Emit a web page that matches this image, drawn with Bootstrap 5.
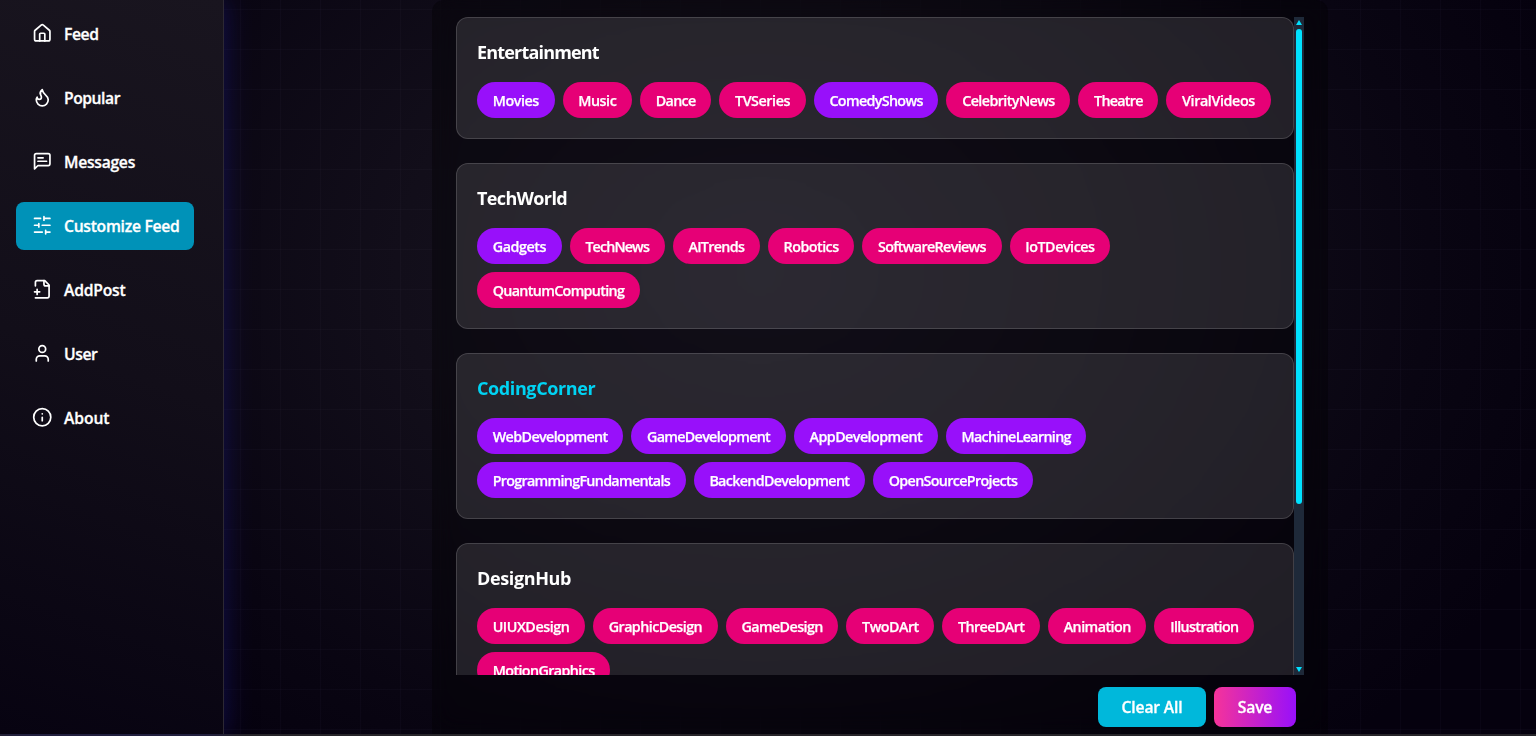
<!DOCTYPE html>
<html lang="en">
<head>
<meta charset="utf-8">
<meta name="viewport" content="width=device-width, initial-scale=1">
<title>Customize Feed</title>
<link href="https://cdn.jsdelivr.net/npm/bootstrap@5.3.0/dist/css/bootstrap.min.css" rel="stylesheet">
<style>
body{font-family:"Open Sans","Noto Sans",sans-serif;color:#fff;background:radial-gradient(ellipse 860px 640px at 760px 270px,#1a1625 0%,#120e1a 42%,#090512 78%,#05010e 100%)}
.app-shell{height:736px;background-image:linear-gradient(rgba(190,180,255,.025) 1px,transparent 1px),linear-gradient(90deg,rgba(190,180,255,.025) 1px,transparent 1px);background-size:40px 40px;background-position:0 9px;border-bottom:2px solid #262429}
.side-menu{width:224px;padding:9.7px 16px;gap:16px;background:linear-gradient(200deg,#19151f 0%,#120e19 50%,#070311 100%);border-right:1px solid #2c2833;box-shadow:0 0 24px 1px rgba(24,22,120,.55);z-index:1}
.side-link{height:48px;padding:0 15.5px;gap:12px;border-radius:8px;color:#fff;text-decoration:none;font-weight:600;font-size:15.7px;line-height:24px;align-self:stretch;margin-right:13px;white-space:nowrap;-webkit-text-stroke:.3px currentColor}
.side-link.active{background:#0092b8}
.side-link svg{width:20.5px;height:20.5px;flex:none;fill:none;stroke:currentColor;stroke-width:2;stroke-linecap:round;stroke-linejoin:round}
.side-link span{padding-top:1px}
.panel-box{width:896px;padding:17px 24px 0;border-radius:12px 12px 0 0;background:rgba(0,0,0,.33);backdrop-filter:blur(12px)}
.topic-scroll{height:658px;width:848px;overflow:hidden}
.topic-list{width:837.5px;gap:24px}
.topic-box{flex:none;padding:20px;border:1px solid rgba(255,255,255,.15);border-radius:12px;background:rgba(255,255,255,.11)}
.topic-box h3{font-size:18px;line-height:28px;font-weight:700;margin:0 0 16px;white-space:nowrap}
.topic-box h3.picked{color:#00d3f3}
.chips{gap:8px;max-width:796px}
.chip{height:36px;border-radius:18px;background:#e60076;font-size:14.3px;font-weight:600;line-height:20px;white-space:nowrap;padding-top:2px;-webkit-text-stroke:.25px currentColor}
.chip.picked{background:#9810fa}
.track{width:10.5px;background:#1e2939;padding:3px 0}
.track i{display:block;width:0;height:0;border:3.5px solid transparent}
.track .up{border-top:0;border-bottom:5px solid #00e1ff}
.track .down{border-bottom:0;border-top:5px solid #00e1ff}
.thumb{width:6px;height:475px;border-radius:3px;background:#00e1ff;margin-top:4px}
.act{height:40px;border:0;border-radius:8px;color:#fff;font-weight:600;font-size:15.7px;padding:2px 0 0;-webkit-text-stroke:.3px currentColor}
.act-clear{width:108px;background:#00b8db}
.act-save{width:82px;background:linear-gradient(90deg,#f6339a,#9810fa)}
</style>
</head>
<body class="overflow-hidden">
<div class="app-shell d-flex">
  <nav class="side-menu d-flex flex-column flex-shrink-0 position-relative">
    <a href="#" class="side-link d-flex align-items-center"><svg viewBox="0 0 24 24"><path d="M15 21v-8a1 1 0 0 0-1-1h-4a1 1 0 0 0-1 1v8"/><path d="M3 10a2 2 0 0 1 .709-1.528l7-5.999a2 2 0 0 1 2.582 0l7 5.999A2 2 0 0 1 21 10v9a2 2 0 0 1-2 2H5a2 2 0 0 1-2-2z"/></svg><span data-fit="34.5">Feed</span></a>
    <a href="#" class="side-link d-flex align-items-center"><svg viewBox="0 0 24 24"><path d="M8.5 14.5A2.5 2.5 0 0 0 11 12c0-1.38-.5-2-1-3-1.072-2.143-.224-4.054 2-6 .5 2.5 2 4.9 4 6.5 2 1.6 3 3.5 3 5.5a7 7 0 1 1-14 0c0-1.153.433-2.294 1-3a2.5 2.5 0 0 0 2.5 2.5z"/></svg><span data-fit="56">Popular</span></a>
    <a href="#" class="side-link d-flex align-items-center"><svg viewBox="0 0 24 24"><path d="M21 15a2 2 0 0 1-2 2H7l-4 4V5a2 2 0 0 1 2-2h14a2 2 0 0 1 2 2z"/><path d="M13 8H7M17 12H7"/></svg><span data-fit="71">Messages</span></a>
    <a href="#" class="side-link active d-flex align-items-center"><svg viewBox="0 0 24 24"><path d="M21 4h-7M10 4H3M21 12h-9M8 12H3M21 20h-5M12 20H3M14 2v4M8 10v4M16 18v4"/></svg><span data-fit="115.5">Customize Feed</span></a>
    <a href="#" class="side-link d-flex align-items-center"><svg viewBox="0 0 24 24"><path d="M4 22h14a2 2 0 0 0 2-2V7l-5-5H6a2 2 0 0 0-2 2v4"/><path d="M14 2v4a2 2 0 0 0 2 2h4M3 15h6M6 12v6"/></svg><span data-fit="61.5">AddPost</span></a>
    <a href="#" class="side-link d-flex align-items-center"><svg viewBox="0 0 24 24"><path d="M19 21v-2a4 4 0 0 0-4-4H9a4 4 0 0 0-4 4v2"/><circle cx="12" cy="7" r="4"/></svg><span data-fit="33.5">User</span></a>
    <a href="#" class="side-link d-flex align-items-center"><svg viewBox="0 0 24 24"><circle cx="12" cy="12" r="10"/><path d="M12 16v-4M12 8h.01"/></svg><span data-fit="45.5">About</span></a>
  </nav>
  <main class="flex-grow-1 d-flex justify-content-center">
    <section class="panel-box">
      <div class="topic-scroll d-flex">
        <div class="topic-list d-flex flex-column" id="topics"></div>
        <div class="track d-flex flex-column align-items-center">
          <i class="up"></i><div class="thumb"></div><i class="down mt-auto"></i>
        </div>
      </div>
      <div class="d-flex justify-content-end gap-2 pt-2 mt-1 pe-2">
        <button class="act act-clear"><span data-fit="61">Clear All</span></button>
        <button class="act act-save"><span data-fit="34.5">Save</span></button>
      </div>
    </section>
  </main>
</div>
<script src="https://cdn.jsdelivr.net/npm/bootstrap@5.3.0/dist/js/bootstrap.bundle.min.js"></script>
<script>
// Each tag is [label, chip width, picked]
const topics = [
  {name:'Entertainment', fit:121.8, tags:[['Movies',77.5,1],['Music',69.5],['Dance',71.3],['TVSeries',86.4],['ComedyShows',124.8,1],['CelebrityNews',123.9],['Theatre',80],['ViralVideos',104.2]]},
  {name:'TechWorld', fit:90, tags:[['Gadgets',84.7,1],['TechNews',95],['AITrends',87.2],['Robotics',86.5],['SoftwareReviews',139.2],['IoTDevices',100.8],['QuantumComputing',163]]},
  {name:'CodingCorner', fit:118.2, picked:1, tags:[['WebDevelopment',146.3,1],['GameDevelopment',154.5,1],['AppDevelopment',144,1],['MachineLearning',140.7,1],['ProgrammingFundamentals',208.7,1],['BackendDevelopment',171.3,1],['OpenSourceProjects',160,1]]},
  {name:'DesignHub', fit:94, tags:[['UIUXDesign',108],['GraphicDesign',124.8],['GameDesign',112.6],['TwoDArt',88],['ThreeDArt',97.6],['Animation',98.5],['Illustration',99.7],['MotionGraphics',133.3]]}
];
document.getElementById('topics').innerHTML = topics.map(t => `
  <div class="topic-box">
    <h3 class="${t.picked ? 'picked' : ''}"><span data-fit="${t.fit}">${t.name}</span></h3>
    <div class="chips d-flex flex-wrap">${t.tags.map(([label, w, on]) =>
      `<span class="chip d-inline-flex align-items-center justify-content-center ${on ? 'picked' : ''}" style="width:${w}px"><span data-fit="${w - 31.4}">${label}</span></span>`).join('')}</div>
  </div>`).join('');
// Adjust tracking so that each label fills its set width
document.querySelectorAll('[data-fit]').forEach(el => {
  const gap = (el.dataset.fit - el.getBoundingClientRect().width) / el.textContent.length;
  el.style.letterSpacing = gap.toFixed(3) + 'px';
});
</script>
</body>
</html>
